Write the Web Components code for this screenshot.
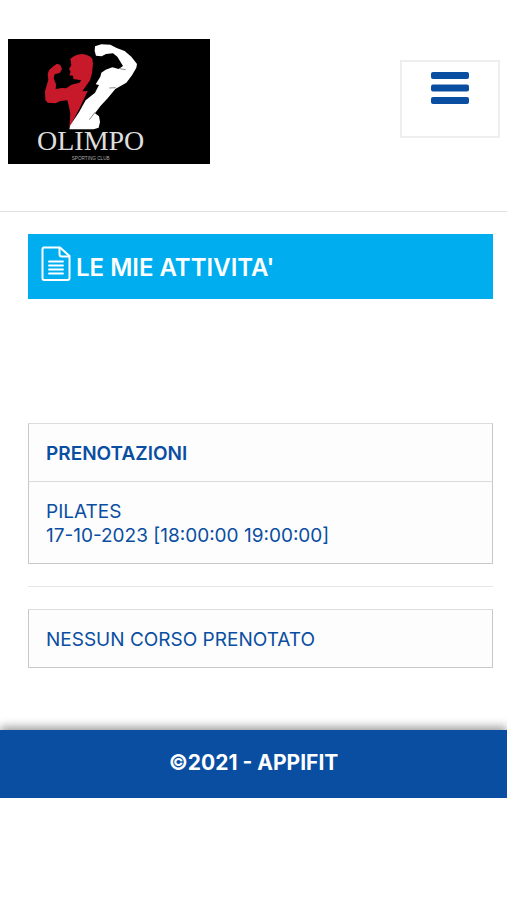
<!DOCTYPE html>
<html lang="it">
<head>
<meta charset="utf-8">
<meta name="viewport" content="width=device-width, initial-scale=1">
<title>Appifit - Le mie attività</title>
<style>
  body {
    margin: 0;
    background: #fff;
    color: #0a4ea2;
    font: 19px/24px Inter, "Liberation Sans", sans-serif;
  }
  main {
    padding: 22px 14px 62px 28px;
  }
  booking-list {
    margin-top: 124px;
  }
  hr {
    margin: 22px 0;
    border: 0;
    border-top: 1px solid #e6e6e6;
  }
</style>
</head>
<body>
  <app-header>
    <club-logo></club-logo>
    <menu-button slot="menu"></menu-button>
  </app-header>
  <main>
    <page-title>LE MIE ATTIVITA'</page-title>
    <booking-list>
      <booking-item><strong>PRENOTAZIONI</strong></booking-item>
      <booking-item>PILATES<br>17-10-2023 [18:00:00 19:00:00]</booking-item>
    </booking-list>
    <hr>
    <booking-item>NESSUN CORSO PRENOTATO</booking-item>
  </main>
  <app-footer>©2021 - APPIFIT</app-footer>

<script>
  class AppHeader extends HTMLElement {
    constructor() {
      super();
      const shadow = this.attachShadow({mode: "open"});
      shadow.innerHTML = `
        <style>
          :host {
            display: block;
            border-bottom: 1px solid #e2e2e2;
          }
          header {
            display: flex;
            justify-content: space-between;
            align-items: center;
            padding: 39px 7px 47px 8px;
          }
          slot[name="menu"] {
            display: block;
            align-self: flex-start;
            padding-top: 21px;
          }
        </style>
        <header>
          <slot></slot>
          <slot name="menu"></slot>
        </header>
      `;
    }
  }
  customElements.define("app-header", AppHeader);

  class ClubLogo extends HTMLElement {
    constructor() {
      super();
      const shadow = this.attachShadow({mode: "open"});
      shadow.innerHTML = `
        <style>
          :host {
            display: block;
            width: 202px;
          }
          svg {
            display: block;
            width: 100%;
            background: #000;
          }
        </style>
        <svg viewBox="24 27 606 375" role="img" aria-label="Olimpo Sporting Club">
          <path fill="#c8192b" d="M211 87 Q224 73 246 72 Q266 74 277 86 L279 101 L276 130 L270 151 L247 184 L263 183 L239 234 L208 293 L211 252 L207 230 L202 211 L181 213 L166 220 L143 218 L136 210 L135 184 L145 149 L143 132 L147 121 L160 109 L171 101 L181 105 L186 117 L180 128 L164 133 L161 145 L168 163 L167 178 L184 174 L199 175 L214 164 L238 158 L244 151 L220 147 L219 137 L208 136 L212 125 L207 117 L214 105 Z"/>
          <path fill="#fff" d="M285 49 L304 43 L331 44 L350 54 L374 63 L394 80 L411 102 L409 113 L396 136 L379 158 L346 177 L323 205 L302 227 L285 250 L297 259 L300 276 L296 293 L281 298 L208 298 L211 286 L237 247 L257 211 L285 188 L297 165 L287 163 L301 140 L304 128 L317 119 L337 112 L356 117 L369 108 L352 80 L339 70 L318 72 L305 79 L288 77 L284 63 Z"/>
          <path fill="none" stroke="#888" stroke-width="3" d="M286 246 L268 269 M328 174 L347 173 M359 116 L377 119"/>
          <text x="272" y="360" text-anchor="middle" font-family="Liberation Serif, serif" font-size="84" fill="#ddd">OLIMPO</text>
          <text x="272" y="391" text-anchor="middle" font-family="Liberation Sans, sans-serif" font-size="14" fill="#aaa">SPORTING CLUB</text>
        </svg>
      `;
    }
  }
  customElements.define("club-logo", ClubLogo);

  class MenuButton extends HTMLElement {
    constructor() {
      super();
      const shadow = this.attachShadow({mode: "open"});
      shadow.innerHTML = `
        <style>
          :host {
            display: block;
          }
          button {
            display: block;
            padding: 10px 29px 32px;
            border: 2px solid #eee;
            background: #fff;
            color: #0a4ea2;
            cursor: pointer;
          }
          svg {
            display: block;
            width: 38px;
            height: 32px;
          }
        </style>
        <button type="button" aria-label="Menu">
          <svg viewBox="0 0 38 32" fill="currentColor" aria-hidden="true">
            <rect y="0" width="38" height="7" rx="2"/>
            <rect y="12.5" width="38" height="7" rx="2"/>
            <rect y="25" width="38" height="7" rx="2"/>
          </svg>
        </button>
      `;
    }
  }
  customElements.define("menu-button", MenuButton);

  class PageTitle extends HTMLElement {
    constructor() {
      super();
      const shadow = this.attachShadow({mode: "open"});
      shadow.innerHTML = `
        <style>
          :host {
            display: block;
            background: #00aeef;
            color: #fff;
          }
          h1 {
            display: flex;
            align-items: center;
            gap: 5px;
            margin: 0;
            padding: 12px 13px 17px;
            font-size: 24px;
            line-height: 28px;
            font-weight: 600;
          }
          svg {
            flex: none;
            width: 30px;
            height: 36px;
          }
          span {
            padding-top: 8px;
          }
        </style>
        <h1>
          <svg viewBox="0 0 30 36" fill="none" stroke="currentColor" stroke-width="2" stroke-linejoin="round" stroke-linecap="round" aria-hidden="true">
            <path d="M3 1.5 H19 L28.5 10 V32 Q28.5 34 26.5 34 H3 Q1.5 34 1.5 32 V3 Q1.5 1.5 3 1.5 Z"/>
            <path d="M18.5 2 V8 Q18.5 10.5 21 10.5 H28"/>
            <path d="M8 15.5 H22 M8 19.5 H22 M8 23.5 H22 M8 27.5 H22" stroke-width="1.8"/>
          </svg>
          <span><slot></slot></span>
        </h1>
      `;
    }
  }
  customElements.define("page-title", PageTitle);

  class BookingList extends HTMLElement {
    constructor() {
      super();
      const shadow = this.attachShadow({mode: "open"});
      shadow.innerHTML = `
        <style>
          :host {
            display: block;
          }
          ::slotted(:not(:last-child)) {
            --item-border-bottom: 0;
          }
        </style>
        <slot></slot>
      `;
    }
  }
  customElements.define("booking-list", BookingList);

  class BookingItem extends HTMLElement {
    constructor() {
      super();
      const shadow = this.attachShadow({mode: "open"});
      shadow.innerHTML = `
        <style>
          :host {
            display: block;
            padding: 18px 17px 15px;
            border: 1px solid #c8c8c8;
            border-top-color: #dcdcdc;
            border-bottom-width: var(--item-border-bottom, 1px);
            background: #fdfdfd;
          }
          ::slotted(strong) {
            font-weight: 600;
          }
        </style>
        <slot></slot>
      `;
    }
  }
  customElements.define("booking-item", BookingItem);

  class AppFooter extends HTMLElement {
    constructor() {
      super();
      const shadow = this.attachShadow({mode: "open"});
      shadow.innerHTML = `
        <style>
          :host {
            display: block;
            background: #0a4ea2;
            color: #fff;
            box-shadow: 0 -3px 9px rgba(0, 0, 0, 0.4);
          }
          footer {
            padding: 21px 16px 23px;
            font-size: 21px;
            font-weight: 700;
            text-align: center;
          }
        </style>
        <footer><slot></slot></footer>
      `;
    }
  }
  customElements.define("app-footer", AppFooter);
</script>
</body>
</html>
